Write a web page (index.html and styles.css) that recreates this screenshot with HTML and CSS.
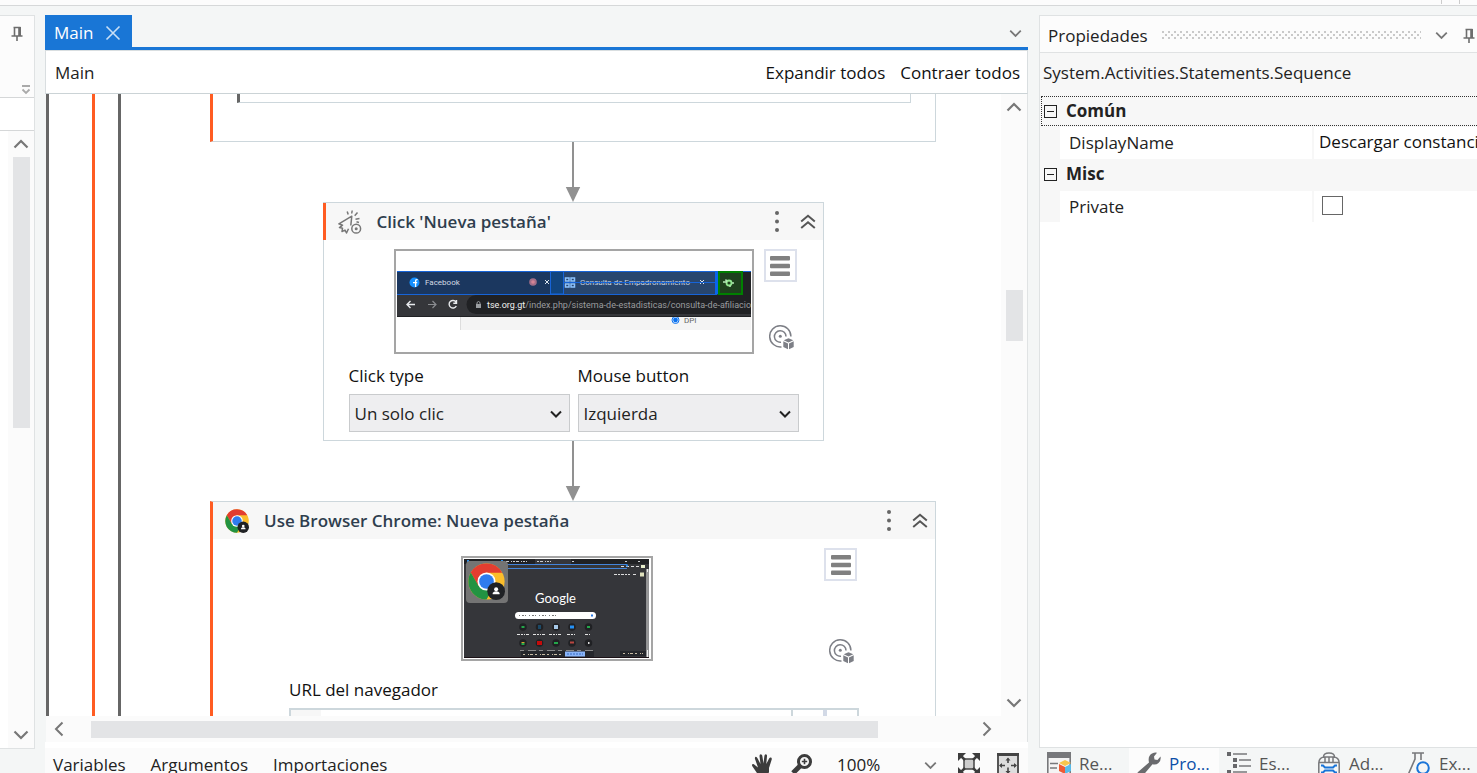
FILE: index.html
```html
<!DOCTYPE html>
<html lang="es">
<head>
<meta charset="utf-8">
<title>Main</title>
<link rel="stylesheet" href="styles.css">
</head>
<body>
<svg class="defs" aria-hidden="true">
  <symbol id="pin" viewBox="0 0 12 16"><path d="M3.5 1v8.5M2.5 1.5h7M8 1v9M9.2 1v9M0.5 10h11M6 10v5" fill="none" stroke="#6d6d6d" stroke-width="1.6"/></symbol>
  <symbol id="down" viewBox="0 0 16 10"><path d="M1.5 1.5 8 8l6.500-6.500" fill="none" stroke="currentColor" stroke-width="2.200"/></symbol>
  <symbol id="dots" viewBox="0 0 6 24"><g fill="#666"><circle cx="3" cy="3" r="2"/><circle cx="3" cy="11.500" r="2"/><circle cx="3" cy="20" r="2"/></g></symbol>
  <symbol id="collapse" viewBox="0 0 16 16"><path d="M1.200 7.500 8 1.800 14.800 7.500M1.200 14 8 8.300 14.800 14" fill="none" stroke="#555" stroke-width="2"/></symbol>
  <symbol id="bars" viewBox="0 0 20 20"><g fill="#808080"><rect width="20" height="4.400" rx="1"/><rect y="7.800" width="20" height="4.400" rx="1"/><rect y="15.600" width="20" height="4.400" rx="1"/></g></symbol>
  <symbol id="target" viewBox="0 0 25 25">
    <g fill="none" stroke="#7d7f86" stroke-width="1.500"><path d="M12.500 21.900A10.600 10.600 0 1 1 21.900 11.500"/><path d="M12 17.200A5.800 5.800 0 1 1 17 11.500"/></g>
    <circle cx="11.300" cy="11.300" r="1.500" fill="#7d7f86"/>
    <path d="m19.500 13.200 4.800 2.100-4.800 2.100-4.800-2.100zM14.300 16.300l4.700 2.100v5.800l-4.700-2.300zM24.700 16.300 20 18.400v5.800l4.700-2.300z" fill="#7d7f86"/>
  </symbol>
  <symbol id="chrome" viewBox="0 0 48 48">
    <circle cx="24" cy="24" r="23.500" fill="#fbbd2b"/>
    <path d="M3.600 12.300A23.500 23.500 0 0 1 44.400 12.500H24L13.800 30z" fill="#e33d30"/>
    <path d="M3.600 12.300A23.500 23.500 0 0 0 24 47.500L34.200 29.900 13.800 29.900z" fill="#229342"/>
    <circle cx="24" cy="24" r="11.700" fill="#fff"/><circle cx="24" cy="24" r="9.500" fill="#2f7cee"/>
    <circle cx="36.500" cy="36.500" r="11.500" fill="#202225"/>
    <circle cx="36.500" cy="34" r="2.600" fill="#fff"/><path d="M32 40.500v-1.500q1-2.500 4.500-2.500t4.500 2.500v1.500z" fill="#fff"/>
  </symbol>
</svg>

<div class="ribbon"><span class="ribbon-split"></span></div>

<div class="workspace">
  <aside class="side">
    <div class="side-head"><button class="plain" aria-label="Anclar"><svg width="12" height="16"><use href="#pin"/></svg></button></div>
    <div class="side-tools"><svg width="10" height="10" viewBox="0 0 10 10"><path d="M1 1h8M1.500 4.500 5 8l3.500-3.500" fill="none" stroke="#aaa" stroke-width="1.800"/></svg></div>
    <div class="side-search"></div>
    <div class="side-list">
      <div class="vscroll">
        <svg class="flip" width="16" height="10"><use href="#down"/></svg>
        <div class="track"><div class="thumb thumb-side"></div></div>
        <svg width="16" height="10"><use href="#down"/></svg>
      </div>
    </div>
  </aside>

  <main class="doc">
    <div class="tabs">
      <button class="tab">Main <svg width="16" height="16" viewBox="0 0 16 16"><path d="M1.500 1.500l13 13M14.500 1.500l-13 13" stroke="#c9dff6" stroke-width="1.600"/></svg></button>
      <svg class="tabs-more" width="13" height="9" viewBox="0 0 16 10"><use href="#down"/></svg>
    </div>
    <div class="crumbs">
      <span>Main</span>
      <div class="crumb-actions"><button class="plain">Expandir todos</button><button class="plain">Contraer todos</button></div>
    </div>

    <div class="view">
      <div class="canvas">
        <div class="rail rail-a"><div class="rail rail-b"><div class="rail rail-c">
          <div class="flow">
            <section class="card wide marked prev"><div class="prev-inner"></div></section>
            <svg class="arrow" width="16" height="60" viewBox="0 0 16 60"><path d="M8 0v46" stroke="#919191" stroke-width="2"/><path d="M.800 45h14.400L8 60z" fill="#919191"/></svg>

            <section class="card click">
              <header class="card-head marked">
                <svg class="card-icon" width="24" height="24" viewBox="0 0 24 24"><g fill="none" stroke="#777" stroke-width="1.500" stroke-linejoin="round"><path d="M12.800 15.500 13.800 6.200.900 13.800l3.600 1.400-3 2.400 3 .700-.5 3.200 3-1.400 1.500 2.900 2-4.200"/><path d="M9.200 1.500l1 3M14.200.500l-.5 3M19.500 2.500l-2.800 3.200M21.500 8.500l-4 .700M21 12.500l-2.500-.8"/><circle cx="18.200" cy="18.700" r="4.400"/></g><circle cx="18.200" cy="18.700" r="1.500" fill="#777"/></svg>
                <h2>Click 'Nueva pestaña'</h2>
                <button class="plain" aria-label="Opciones"><svg width="6" height="24"><use href="#dots"/></svg></button>
                <button class="plain" aria-label="Contraer"><svg width="16" height="16"><use href="#collapse"/></svg></button>
              </header>
              <div class="click-body">
                <div class="shot-row">
                  <div class="shot">
                    <svg width="356" height="101" viewBox="0 0 356 101">
                      <path d="M64 60h291v19H64z" fill="#f4f4f4"/><path d="M64.500 60v19" stroke="#ddd"/>
                      <circle cx="279.500" cy="69" r="3.500" fill="#fff" stroke="#0b72f0"/><circle cx="279.500" cy="69" r="2.400" fill="#0b72f0"/>
                      <text x="288" y="72" font-size="8" fill="#666">DPI</text>
                      <path d="M1 20h354v46H1z" fill="#202124"/><path d="M1 20h322v24H1z" fill="#1b375f"/><path d="M1 44h354v21H1z" fill="#35363a"/>
                      <path d="M168 20h152v23H168z" fill="#28466e"/><path d="M154 20h13v23h-13z" fill="#11457f"/>
                      <path d="M355 44H80a9.500 9.500 0 0 0 0 19h275z" fill="#202124"/>
                      <circle cx="18.500" cy="31.500" r="5" fill="#1690ff"/><path d="M19.600 36v-4.400h1.600M17 31.600h2.600v-1.500q0-1.700 2-1.500" fill="none" stroke="#fff" stroke-width="1.300"/>
                      <text x="29" y="34" font-size="8" fill="#d4dae3">Facebook</text>
                      <circle cx="137" cy="31" r="3.800" fill="#a36e88"/><circle cx="137" cy="31" r="1.800" fill="#d58496"/>
                      <path d="m149 29 4 4m0-4-4 4M304 29l4 4m0-4-4 4" stroke="#dce5ef"/>
                      <path d="M169.500 27h3.500v3h-3.500zm5.500 0h3.500v3h-3.500zm-5.500 6h3.500v3h-3.500zm5.500 0h3.500v3h-3.500z" fill="none" stroke="#8cc3ff" stroke-width="1.500"/>
                      <text x="184" y="34" font-size="8" fill="#c9d6e6">Consulta de Empadronamiento</text>
                      <path d="M1 43.500h320M154.500 20v23h13V20M168 31.500h153M1 20.500h354" fill="none" stroke="#1764d8"/><path d="M320.500 20v23" stroke="#0a64ec" stroke-width="3"/>
                      <path d="M323 21h23v22h-23z" fill="#1e401d" stroke="#008000" stroke-width="2"/>
                      <circle cx="333" cy="32" r="2.500" fill="none" stroke="#8fe58d" stroke-width="1.800"/><path d="M327 31h4M329.500 28.500l1.500 2M334 36v-1.500M338 32h-2" stroke="#b5e9b5" stroke-width="1.500"/>
                      <path d="M19 53.500h-8m3.500-3.500-3.500 3.500 3.500 3.500" fill="none" stroke="#e8eaed" stroke-width="1.400"/>
                      <path d="M32 53.500h8m-3.500-3.500 3.500 3.500-3.500 3.500" fill="none" stroke="#8a8c90" stroke-width="1.200"/>
                      <path d="M60 51a3.800 3.800 0 1 0 .300 4M60.500 49v3.200h-3.200" fill="none" stroke="#e8eaed" stroke-width="1.400"/>
                      <rect x="80" y="53" width="5" height="4" fill="#9a9da1"/><path d="M81 53v-1.500q1.500-2 3 0V53" fill="none" stroke="#9a9da1"/>
                      <text x="91" y="57" font-size="9" fill="#9a9c9f"><tspan fill="#f0f0f0">tse.org.gt</tspan>/index.php/sistema-de-estadisticas/consulta-de-afiliacio</text>
                    </svg>
                  </div>
                  <div class="shot-tools">
                    <button class="menu" aria-label="Menú"><svg width="20" height="20"><use href="#bars"/></svg></button>
                    <svg class="target" width="25" height="25"><use href="#target"/></svg>
                  </div>
                </div>
                <div class="fields">
                  <div class="field"><label for="ctype">Click type</label><div class="select"><select id="ctype"><option>Un solo clic</option></select><svg width="12" height="9" viewBox="0 0 12 9"><path d="M1 1.500 6 6.500l5-5" fill="none" stroke="#222" stroke-width="2"/></svg></div></div>
                  <div class="field"><label for="mbtn">Mouse button</label><div class="select"><select id="mbtn"><option>Izquierda</option></select><svg width="12" height="9" viewBox="0 0 12 9"><path d="M1 1.500 6 6.500l5-5" fill="none" stroke="#222" stroke-width="2"/></svg></div></div>
                </div>
              </div>
            </section>
            <svg class="arrow" width="16" height="60" viewBox="0 0 16 60"><path d="M8 0v46" stroke="#919191" stroke-width="2"/><path d="M.800 45h14.400L8 60z" fill="#919191"/></svg>

            <section class="card wide marked">
              <header class="card-head">
                <svg class="card-icon" width="24" height="24"><use href="#chrome"/></svg>
                <h2>Use Browser Chrome: Nueva pestaña</h2>
                <button class="plain" aria-label="Opciones"><svg width="6" height="24"><use href="#dots"/></svg></button>
                <button class="plain" aria-label="Contraer"><svg width="16" height="16"><use href="#collapse"/></svg></button>
              </header>
              <div class="browser-body">
                <div class="browser-row">
                  <div class="shot">
                    <svg width="188" height="101" viewBox="0 0 188 101">
                      <path d="M1 1h185v99H1z" fill="#35363a"/><path d="M1 1h185v5H1z" fill="#202124"/><path d="M72 1h36v5H72z" fill="#35363a"/><path d="M1 99h185v1H1z" fill="#1b1116"/>
                      <path d="M6 3.500h8m26 0h24m10 0h14m21 0h2m51 0h2m11 0h2" stroke="#c9ccd0" stroke-dasharray="2 1 3 2 1 1"/><path d="M4 3h2M38 3h2" stroke="#2d8fe8" stroke-width="2"/>
                      <path d="M8 6.500h156M44 10.500h120" stroke="#4384da"/><path d="M158 8.500h19" stroke="#ddd" stroke-dasharray="3 2"/><path d="M163 7.500h2" stroke="#2580df" stroke-width="2"/><path d="M178 7h4v3h-4z" fill="#e8eecc"/>
                      <path d="M151 16.500h16m3 0h4" stroke="#ddd" stroke-dasharray="3 1 2 1"/><path d="M177 14.500h4v4h-4z" fill="#e0e2be"/>
                      <rect x="3" y="3" width="42" height="42" rx="4" fill="#747474"/>
                      <svg x="5" y="5" width="37" height="37"><use href="#chrome"/></svg>
                      <text class="logo" x="92.500" y="45" text-anchor="middle" font-size="13" fill="#fff">Google</text>
                      <rect x="52" y="54" width="81" height="7" rx="3.500" fill="#fff"/><path d="M56 57.500h40" stroke="#777" stroke-dasharray="1 2 2 1 1 3"/><path d="M128 57.500h2" stroke="#2b7be5" stroke-width="2"/>
                      <g fill="#202124"><circle cx="60" cy="69" r="3.800"/><circle cx="76.500" cy="69" r="3.800"/><circle cx="93" cy="69" r="3.800"/><circle cx="109" cy="69" r="3.800"/><circle cx="125.500" cy="69" r="3.800"/><circle cx="60" cy="85" r="3.800"/><circle cx="76.500" cy="85" r="3.800"/><circle cx="93" cy="85" r="3.800"/><circle cx="109" cy="85" r="3.800"/><circle cx="125.500" cy="85" r="3.800"/></g>
                      <path d="M58.500 69h3M124 69h3M91 85h4M58.500 86h3" stroke="#24a64a" stroke-width="2"/><path d="M75 69h3" stroke="#1c4967" stroke-width="4"/><path d="M91 69h4" stroke="#a6c8e8" stroke-width="4"/><path d="M107 69h4" stroke="#2591f5" stroke-width="3"/><path d="M74 85h5" stroke="#c40b0b" stroke-width="4"/><path d="M107 84.500h4" stroke="#b94741" stroke-width="2"/><path d="M58.500 84.500h3" stroke="#d6a030"/><path d="M125 85h1.500" stroke="#ddd" stroke-width="2"/>
                      <path d="M54 76.500h12m4 0h12m4 0h12m6 0h8m10 0h5" stroke="#e4e4e4" stroke-dasharray="3 1 2 1 1 1"/><path d="M57 92.500h75" stroke="#8b8b8b" stroke-dasharray="4 4 8 3"/>
                      <path d="M58 93h73v6H58zM157 93h26v5h-26z" fill="#25272c"/><path d="M60 96.500h40M160 95.500h20" stroke="#c9bda5" stroke-dasharray="2 3 1 1 3 2"/><path d="M102 93.500h20v5h-20z" fill="#8ab4f8"/><path d="M104 96h16" stroke="#376bc0" stroke-dasharray="2 1"/>
                      <path d="M184.500 11v88" stroke="#eee" stroke-width="2"/><path d="M184.500 14v78" stroke="#999"/>
                    </svg>
                  </div>
                  <div class="shot-tools">
                    <button class="menu" aria-label="Menú"><svg width="20" height="20"><use href="#bars"/></svg></button>
                    <svg class="target" width="25" height="25"><use href="#target"/></svg>
                  </div>
                </div>
                <label for="url">URL del navegador</label>
                <div class="url"><span class="url-lead"></span><input id="url" type="text"><span class="url-more"></span><button class="url-button" aria-label="Más"></button></div>
              </div>
            </section>
          </div>
        </div></div></div>
      </div>
      <div class="vscroll">
        <svg class="flip" width="16" height="10"><use href="#down"/></svg>
        <div class="track"><div class="thumb thumb-doc"></div></div>
        <svg width="16" height="10"><use href="#down"/></svg>
      </div>
    </div>
    <div class="hscroll">
      <svg width="10" height="16" viewBox="0 0 10 16"><path d="M8.500 1.500 2 8l6.500 6.500" fill="none" stroke="#777" stroke-width="2"/></svg>
      <div class="htrack"><div class="hthumb"></div></div>
      <svg width="10" height="16" viewBox="0 0 10 16"><path d="M1.500 1.500 8 8l-6.500 6.500" fill="none" stroke="#777" stroke-width="2"/></svg>
    </div>
    <footer class="status">
      <nav class="status-links"><button class="plain">Variables</button><button class="plain">Argumentos</button><button class="plain">Importaciones</button></nav>
      <div class="status-tools">
        <svg width="24" height="24" viewBox="0 0 24 24"><path d="M8 23 1.500 13.500q-1.200-2 .300-2.500 1-.2 2 1L7 14.500 4 6q-.4-1.800.700-2.200 1.100-.2 1.800 1.500L9.500 11 8.500 3q0-1.700 1.300-1.800 1.200 0 1.500 1.500l1.200 7.800.9-7.700q.3-1.600 1.500-1.500 1.300.3 1.100 1.900L15.300 11l2.800-5.500q.8-1.300 1.900-.9 1.100.600.700 2L18 15v4l-2 5z" transform="translate(1 0)" fill="#3c3c3c"/></svg>
        <svg width="22" height="24" viewBox="0 0 22 24"><circle cx="13.500" cy="8.500" r="6" fill="#f7f7f7" stroke="#3c3c3c" stroke-width="3"/><path d="M13.500 5.800v5.400M10.800 8.500h5.400" stroke="#3c3c3c" stroke-width="1.600"/><path d="M9 13 2 20" stroke="#3c3c3c" stroke-width="5"/></svg>
        <button class="plain zoom">100%<svg width="13" height="9" viewBox="0 0 16 10"><use href="#down"/></svg></button>
        <svg width="22" height="22" viewBox="0 0 22 22"><rect x="6" y="6" width="10" height="10" fill="#ccc" stroke="#444" stroke-width="1.500"/><path d="m2 2 5 5M20 2l-5 5M2 20l5-5M20 20l-5-5" stroke="#3c3c3c" stroke-width="2.500"/><path d="M0 0h8L0 8zM22 0h-8l8 8zM0 22h8l-8-8zM22 22h-8l8-8z" fill="#3c3c3c"/></svg>
        <svg width="22" height="22" viewBox="0 0 22 22"><rect x="1" y="1" width="20" height="22" fill="#ddd" stroke="#555" stroke-width="2"/><path d="M0 0h22v3H0z" fill="#444"/><path d="M11 5.500v4.500M11 14.500v5M3 12.500h5M14 12.500h5" stroke="#444" stroke-width="1.600"/><path d="m8.500 7.500 2.500-3 2.500 3zM5 10v5l-3-2.500zM17 10v5l3-2.500zM8.500 18l2.500 3 2.500-3z" fill="#444"/></svg>
      </div>
    </footer>
  </main>

  <aside class="props">
    <div class="props-box">
      <div class="props-head"><span>Propiedades</span><svg class="grip" height="10"><defs><pattern id="grip" width="6" height="6" patternUnits="userSpaceOnUse"><path d="M0 0h2v2H0zM3 3h2v2H3z" fill="#c9c9c9"/></pattern></defs><rect width="100%" height="9" fill="url(#grip)"/></svg>
        <svg width="13" height="9" viewBox="0 0 16 10"><use href="#down"/></svg>
        <button class="plain" aria-label="Anclar"><svg width="12" height="16"><use href="#pin"/></svg></button></div>
      <div class="props-type">System.Activities.Statements.Sequence</div>
      <div class="group focus"><button class="expander" aria-label="Contraer Común"></button>Común</div>
      <div class="prop"><label for="dname">DisplayName</label><input id="dname" type="text" value="Descargar constancia"></div>
      <div class="group"><button class="expander" aria-label="Contraer Misc"></button>Misc</div>
      <div class="prop"><label for="priv">Private</label><div class="prop-check"><input id="priv" type="checkbox"></div></div>
      <div class="props-empty"></div>
    </div>
    <nav class="dock">
      <button><svg width="24" height="24" viewBox="0 0 24 24"><path d="M.800 1h22.400v21H.800z" fill="#f4f4f4" stroke="#77787b" stroke-width="1.600"/><path d="M0 0h24v6H0z" fill="#77787b"/><path d="M3 11.500h8M3 16h7" stroke="#77787b" stroke-width="1.600"/><path d="m18 8 6 3-6 3-6-3z" fill="#f6c54d"/><path d="m12 12 6 3v7l-6-3z" fill="#ee5a35"/><path d="m24 12-6 3v7l6-3z" fill="#5abbe8"/></svg>Re...</button>
      <button class="on"><svg width="24" height="24" viewBox="0 0 24 24"><path d="M1 20 12 10.500Q10.500 4 15 1.500q3-1.500 5-.8L17 4.500l.5 3 3 .5 3-3.500q.8 4-2 6.500-2.500 2.200-6 1.300L6 23.500Q3 25.500 1 23.500-.5 22 1 20z" fill="#6a6b6e"/></svg>Pro...</button>
      <button><svg width="24" height="24" viewBox="0 0 24 24"><path d="M0 0h4v4H0zM6 6h4v4H6zM6 12h4v4H6zM0 18h4v4H0z" fill="#66676a"/><path d="M6 2h14M12 8h12M12 14h12M6 20h14" stroke="#77787b" stroke-width="1.600"/></svg>Es...</button>
      <button><svg width="24" height="24" viewBox="0 0 24 24"><path d="M6.500 5q0-4 5.500-4t5.500 4M1.800 22.500V11Q2 5 8 5h8q6 0 6.200 6v11.500M2 10.500h20M8 5v5M12 5v5M16 5v5" fill="none" stroke="#77787b" stroke-width="1.500"/><path d="M4 13.500h2l2 2h8l2-2h2M4 20.500h2l2-2h8l2 2h2" fill="none" stroke="#1a75d8" stroke-width="2"/></svg>Ad...</button>
      <button><svg width="24" height="24" viewBox="0 0 24 24"><path d="M5 1h12M8 1v6L1 23M14 1v7" fill="none" stroke="#77787b" stroke-width="1.600"/><circle cx="16" cy="16" r="5.800" fill="none" stroke="#1a75d8" stroke-width="2"/></svg>Ex...</button>
    </nav>
  </aside>
</div>
</body>
</html>
```

FILE: styles.css
```css
* { box-sizing: border-box; }
html, body { height: 100%; }
body { margin: 0; display: flex; flex-direction: column; overflow: hidden; background: #f4f6f6; color: #222; font: 17px/24px "Open Sans", "Noto Sans", sans-serif; }
button, input, select { font: inherit; color: inherit; }
svg { display: block; flex: none; }
.defs { position: absolute; width: 0; height: 0; }
.plain { border: 0; padding: 0; background: none; display: flex; align-items: center; }

.ribbon { flex: none; height: 6px; background: #fcfcfc; border-bottom: 1px solid #d6d8d9; display: flex; justify-content: flex-end; }
.ribbon-split { width: 19px; height: 4px; margin-right: 17px; border: solid #ccc; border-width: 0 1px; }
.workspace { flex: 1; min-height: 0; display: grid; grid-template-columns: 35px minmax(0, 1fr) 438px; grid-template-rows: minmax(0, 1fr); padding-top: 9px; }

/* left panel */
.side { display: flex; flex-direction: column; margin-bottom: 24px; border: solid #dfe2e3; border-width: 1px 1px 1px 0; background: #fcfcfc; }
.side-head { flex: none; height: 36px; display: flex; align-items: center; justify-content: flex-end; padding-right: 11px; }
.side-tools { flex: none; height: 46px; display: flex; align-items: flex-end; justify-content: flex-end; padding: 0 3px 2px 0; border-bottom: 1px solid #d5d7d8; }
.side-search { flex: none; height: 33px; background: #fff; border-bottom: 1px solid #d5d7d8; }
.side-list { flex: 1; min-height: 0; display: flex; justify-content: flex-end; background: #fff; }

.vscroll { width: 26px; display: flex; flex-direction: column; align-items: center; padding: 8px 0; color: #777; background: #fbfbfb; }
.flip { transform: rotate(180deg); }
.track { flex: 1; min-height: 0; width: 17px; display: flex; flex-direction: column; margin: 8px 0; }
.thumb { background: #e3e4e6; }
.thumb-side { height: 48%; }
.thumb-doc { height: 9%; margin-top: 170px; }

/* document */
.doc { display: flex; flex-direction: column; min-width: 0; margin: 0 11px 0 10px; }
.tabs { flex: none; height: 35px; display: flex; align-items: stretch; justify-content: space-between; border-bottom: 3px solid #1976d6; color: #777; }
.tab { display: flex; align-items: center; gap: 12px; padding: 4px 11px 0 9px; border: 0; background: #1976d6; color: #fff; }
.tabs-more { align-self: center; margin: 4px 6px 0 0; }
.crumbs { flex: none; height: 44px; display: flex; align-items: center; justify-content: space-between; padding: 2px 7px 0 9px; border: 1px solid #d9dee0; border-bottom-color: #cbd3d6; background: #fff; }
.crumb-actions { display: flex; gap: 15px; color: #111; }
.view { flex: 1; min-height: 0; display: flex; margin-left: 1px; border-right: 1px solid #e0e3e4; background: #fff; }
.canvas { flex: 1; min-width: 0; overflow: hidden; }
.rail { border-left: 3px solid #666; }
.rail-b { margin-left: 43px; border-color: #ff5c22; }
.rail-c { margin-left: 23px; }
.flow { width: 815px; padding-left: 89px; display: flex; flex-direction: column; align-items: center; }

.card { flex: none; border: 1px solid #cdd7dc; background: #fff; }
.wide { width: 726px; }
.marked { border-left: 3px solid #ff5c22; }
.prev { height: 48px; border-top: 0; padding: 0 24px; }
.prev-inner { height: 9px; border: 1px solid #cdd7dc; border-top: 0; border-left: 3px solid #666; }
.card-head { height: 37px; display: flex; align-items: center; padding: 0 7px 0 12px; background: #f7f7f7; color: #2f3e4e; }
.card-head h2 { flex: 1; margin: 0; font-size: 17px; font-weight: 600; }
.card-head .plain:last-child { margin-left: 20px; }
.card-icon { margin-right: 15px; }
.click { width: 501px; }
.click .card-head { margin-left: -1px; }
.click-body { padding: 9px 24px 8px 25px; }
.shot-row { display: flex; gap: 10px; margin-left: 45px; }
.shot { border: 2px solid #a5a5a5; background: #fff; font-family: "Roboto", sans-serif; }
.logo { font-family: "Lato", sans-serif; }
.shot-tools { width: 33px; display: flex; flex-direction: column; }
.menu { width: 33px; height: 33px; display: grid; place-items: center; padding: 0; border: 2px solid #dde1ec; background: #fff; }
.target { margin: auto 0 4px 5px; }
.fields { display: grid; grid-template-columns: 1fr 1fr; gap: 8px; margin-top: 10px; }
.field, .browser-body label { color: #111; }
.field label { display: block; margin-bottom: 6px; }
.select { position: relative; }
.select select { appearance: none; width: 100%; height: 38px; padding: 2px 24px 0 5px; border: 1px solid #c9cbcd; border-radius: 0; background: #eeeef0; color: #222; }
.select svg { position: absolute; right: 8px; top: 16px; }

.browser-body { padding: 9px 76px 20px; }
.browser-row { height: 120px; display: grid; grid-template-columns: 1fr 33px; margin-right: 2px; }
.browser-row .shot { justify-self: center; align-self: start; margin-top: 8px; }
.browser-body label { display: block; margin: 10px 0 6px; }
.url { height: 38px; display: flex; border: 2px solid #cdd7dc; }
.url-lead { width: 30px; background: #f7f7f7; }
.url input { flex: 1; border: 0; padding: 0; }
.url-more { width: 32px; border-left: 2px solid #cdd7dc; }
.url-button { width: 34px; padding: 0; border: 0; border-left: 4px solid #d2d9e6; background: #fff; }

.hscroll { flex: none; height: 26px; display: flex; align-items: center; padding: 0 35px 0 8px; margin-left: 1px; border-right: 1px solid #e0e3e4; background: #fbfbfb; }
.htrack { flex: 1; margin: 0 26px 0 27px; }
.hthumb { width: 91%; height: 17px; background: #e3e4e6; }
.status { flex: none; height: 31px; display: flex; justify-content: space-between; padding: 5px 8px 0; border-top: 6px solid #fff; background: #fbfbfb; }
.status-links, .status-tools { display: flex; align-items: flex-start; }
.status-links { gap: 25px; }
.status-tools { gap: 17px; margin-right: 1px; }
.zoom { width: 100px; justify-content: space-between; margin-left: 7px; margin-right: 4px; }
.zoom svg { color: #777; }

/* properties */
.props { min-width: 0; display: flex; flex-direction: column; }
.props-box { flex: 1; min-height: 0; display: flex; flex-direction: column; border: solid #dfe2e3; border-width: 1px 0 1px 1px; background: #f7f7f7; }
.props-head { height: 37px; display: flex; align-items: center; padding: 3px 2px 0 8px; border-bottom: 1px solid #e0e2e3; background: #fcfcfc; color: #777; }
.props-head span { color: #222; }
.grip { flex: 1; min-width: 0; margin: 0 14px; }
.props-head .plain { margin-left: 15px; }
.props-type { height: 43px; padding: 8px 3px; }
.group { height: 32px; display: flex; align-items: center; gap: 9px; padding-left: 4px; font-weight: 700; }
.focus { height: 30px; margin-left: 1px; padding-left: 2px; border: dotted #333; border-width: 1px 0 1px 1px; }
.expander { width: 13px; height: 13px; padding: 0; display: grid; place-items: center; border: 1px solid #222; background: none; }
.expander::before { content: ""; width: 7px; height: 1px; background: #222; }
.prop { height: 32px; display: grid; grid-template-columns: 252px minmax(0, 1fr); gap: 2px; margin-left: 20px; padding: 1px 0; }
.prop > * { background: #fff; }
.prop label { padding: 4px 9px; }
.prop > input { width: 100%; min-width: 0; border: 0; border-radius: 0; padding: 0 0 3px 5px; color: #111; }
.prop-check { padding: 5px 8px; }
.prop-check input { appearance: none; display: block; width: 21px; height: 19px; margin: 0; border: 1px solid #666; background: #fff; }
.props-empty { flex: 1; background: #fff; }
.dock { flex: none; height: 25px; display: flex; overflow: hidden; }
.dock button { flex: none; width: 90px; height: 34px; display: flex; align-items: flex-start; gap: 8px; padding: 4px 0 0 8px; border: 0; background: none; color: #555; }
.dock .on { background: #fcfcfc; color: #0b4fa8; }
```
